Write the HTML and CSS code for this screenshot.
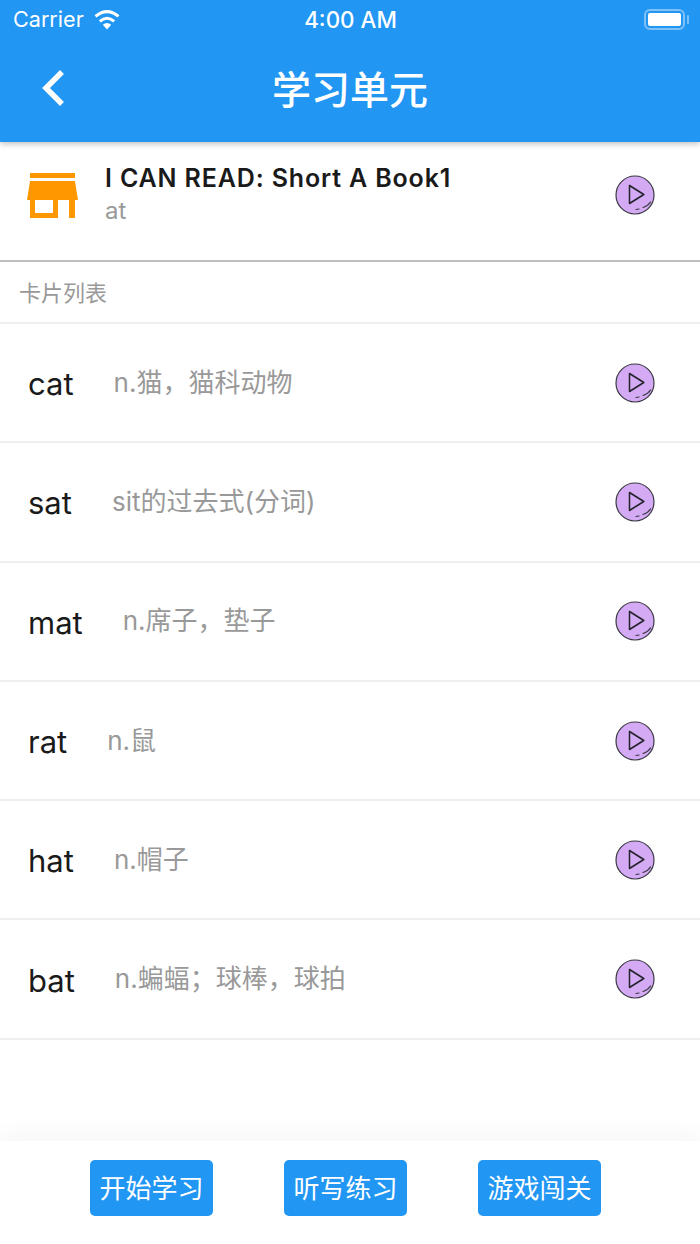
FILE: index.html
```html
<!DOCTYPE html>
<html lang="zh">
    <head>
        <meta charset="UTF-8">
        <meta name="viewport" content="width=device-width, initial-scale=1.0">
        <title>学习单元</title>
        <link rel="stylesheet" href="styles.css">
    </head>

    <body>
        <svg class="defs" width="0" height="0">
            <symbol id="play" viewBox="0 0 40 40">
                <circle cx="20" cy="20" r="19" fill="#d3aaf3" stroke="#3a3a44" stroke-width="1.2"/>
                <path d="M14.500 10.500 L14.500 28.500 L28.800 19.500 Z" fill="none" stroke="#23232b" stroke-width="1.500" stroke-linejoin="round"/>
                <path d="M21 34.500 L24 34 M28 32.500 Q33 31 35.500 27" fill="none" stroke="#3a3a44" stroke-width="1.200" stroke-linecap="round"/>
            </symbol>
        </svg>

        <div class="page">
            <header class="top">
                <div class="status">
                    <div class="status-left">
                        <span>Carrier</span>
                        <svg class="wifi" viewBox="0 0 28 21">
                            <path d="M14 20.500 L9.800 15.800 Q14 12.200 18.200 15.800 Z" fill="#fff"/>
                            <path d="M6.800 12.400 Q14 6.200 21.200 12.400" fill="none" stroke="#fff" stroke-width="3"/>
                            <path d="M2.500 7.400 Q14 -2.200 25.500 7.400" fill="none" stroke="#fff" stroke-width="3"/>
                        </svg>
                    </div>
                    <span class="time">4:00 AM</span>
                    <div class="battery"><div class="battery-fill"></div></div>
                </div>
                <div class="nav">
                    <svg class="back" viewBox="0 0 26 38">
                        <path d="M22 3 L6 19 L22 35" fill="none" stroke="#fff" stroke-width="5.500"/>
                    </svg>
                    <h1>学习单元</h1>
                </div>
            </header>

            <section class="unit">
                <svg class="shop" viewBox="0 0 51 45">
                    <path d="M3 0 H48 V5 H3 Z M3 8 H48 L51 27 H0 Z M3 27 H8 V45 H3 Z M8 40 H26 V27 H31 V45 H8 Z M42 27 H48 V45 H42 Z" fill="#ff9800"/>
                </svg>
                <div class="unit-text">
                    <div class="unit-title">I CAN READ: Short A Book1</div>
                    <div class="unit-sub">at</div>
                </div>
                <svg class="play"><use href="#play"/></svg>
            </section>

            <div class="list-head">卡片列表</div>

            <ul class="cards">
                <li class="card"><span class="word">cat</span><span class="mean">n.猫，猫科动物</span><svg class="play"><use href="#play"/></svg></li>
                <li class="card"><span class="word">sat</span><span class="mean">sit的过去式(分词)</span><svg class="play"><use href="#play"/></svg></li>
                <li class="card"><span class="word">mat</span><span class="mean">n.席子，垫子</span><svg class="play"><use href="#play"/></svg></li>
                <li class="card"><span class="word">rat</span><span class="mean">n.鼠</span><svg class="play"><use href="#play"/></svg></li>
                <li class="card"><span class="word">hat</span><span class="mean">n.帽子</span><svg class="play"><use href="#play"/></svg></li>
                <li class="card"><span class="word">bat</span><span class="mean">n.蝙蝠；球棒，球拍</span><svg class="play"><use href="#play"/></svg></li>
            </ul>

            <footer class="bottom">
                <button class="btn">开始学习</button>
                <button class="btn">听写练习</button>
                <button class="btn">游戏闯关</button>
            </footer>
        </div>
    </body>
</html>
```

FILE: styles.css
```css
*{
    box-sizing: border-box;
}
body{
    margin: 0;
    background: #fff;
    font-family: Inter, "Noto Sans CJK SC", sans-serif;
}
.defs{
    display: block;
}
.page{
    width: 700px;
    height: 1244px;
    display: flex;
    flex-direction: column;
    overflow: hidden;
}
.top{
    height: 142px;
    background: #2196f3;
    color: #fff;
    box-shadow: 0 2px 6px rgba(0,0,0,0.25);
    position: relative;
}
.status{
    height: 38px;
    padding: 0 12px 0 13px;
    display: grid;
    grid-template-columns: 1fr auto 1fr;
    align-items: center;
}
.status-left{
    display: flex;
    align-items: center;
    gap: 9px;
    font-size: 21.600px;
}
.wifi{
    width: 28px;
    height: 21px;
}
.time{
    font-size: 22.400px;
    font-weight: 500;
}
.battery{
    justify-self: end;
    width: 41px;
    height: 21px;
    margin-right: 3px;
    border: 2px solid #7fc0f7;
    border-radius: 6px;
    padding: 2px;
    position: relative;
}
.battery::after{
    content: "";
    position: absolute;
    right: -6px;
    top: 4px;
    width: 2px;
    height: 9px;
    background: #7fc0f7;
    border-radius: 1px;
}
.battery-fill{
    height: 100%;
    background: #fff;
    border-radius: 2px;
}
.nav{
    height: 104px;
    padding: 0 0 4px 40px;
    display: flex;
    align-items: center;
    position: relative;
}
.back{
    width: 26px;
    height: 38px;
}
.nav h1{
    position: absolute;
    left: 0;
    right: 0;
    margin: 0 0 3px;
    text-align: center;
    font-size: 39px;
    font-weight: 500;
}
.unit{
    height: 120px;
    padding: 0 45px 12px 27px;
    display: flex;
    align-items: center;
    border-bottom: 2px solid #bdbdbd;
}
.shop{
    width: 51px;
    height: 45px;
    margin-right: 27px;
}
.unit-text{
    flex: 1;
    padding-bottom: 2px;
}
.unit-title{
    font-size: 25px;
    font-weight: 600;
    color: #1a1a1a;
    letter-spacing: 0.850px;
}
.unit-sub{
    margin-top: 3px;
    font-size: 24px;
    color: #999;
}
.play{
    width: 40px;
    height: 40px;
    flex: none;
}
.list-head{
    height: 62px;
    padding: 0 0 2px 19px;
    display: flex;
    align-items: center;
    font-size: 22px;
    color: #999;
    border-bottom: 2px solid #efefef;
}
.cards{
    list-style: none;
    margin: 0;
    padding: 0;
}
.card{
    height: 119.300px;
    padding: 0 45px 0 28px;
    display: flex;
    align-items: center;
    border-bottom: 2px solid #efefef;
}
.word{
    padding-top: 2px;
    font-size: 31px;
    color: #1a1a1a;
    margin-right: 40px;
}
.mean{
    flex: 1;
    font-size: 26px;
    color: #999;
    padding-bottom: 5px;
}
.bottom{
    margin-top: auto;
    height: 103px;
    padding: 19px 0 0 90px;
    display: flex;
    align-items: flex-start;
    gap: 71px;
    box-shadow: 0 -10px 20px rgba(0,0,0,0.03);
    background: #fff;
}
.btn{
    width: 123px;
    height: 56px;
    padding: 0 0 4px;
    background-color: #2196f3;
    color: #fff;
    border: none;
    border-radius: 5px;
    font-family: inherit;
    font-size: 26px;
}
```
